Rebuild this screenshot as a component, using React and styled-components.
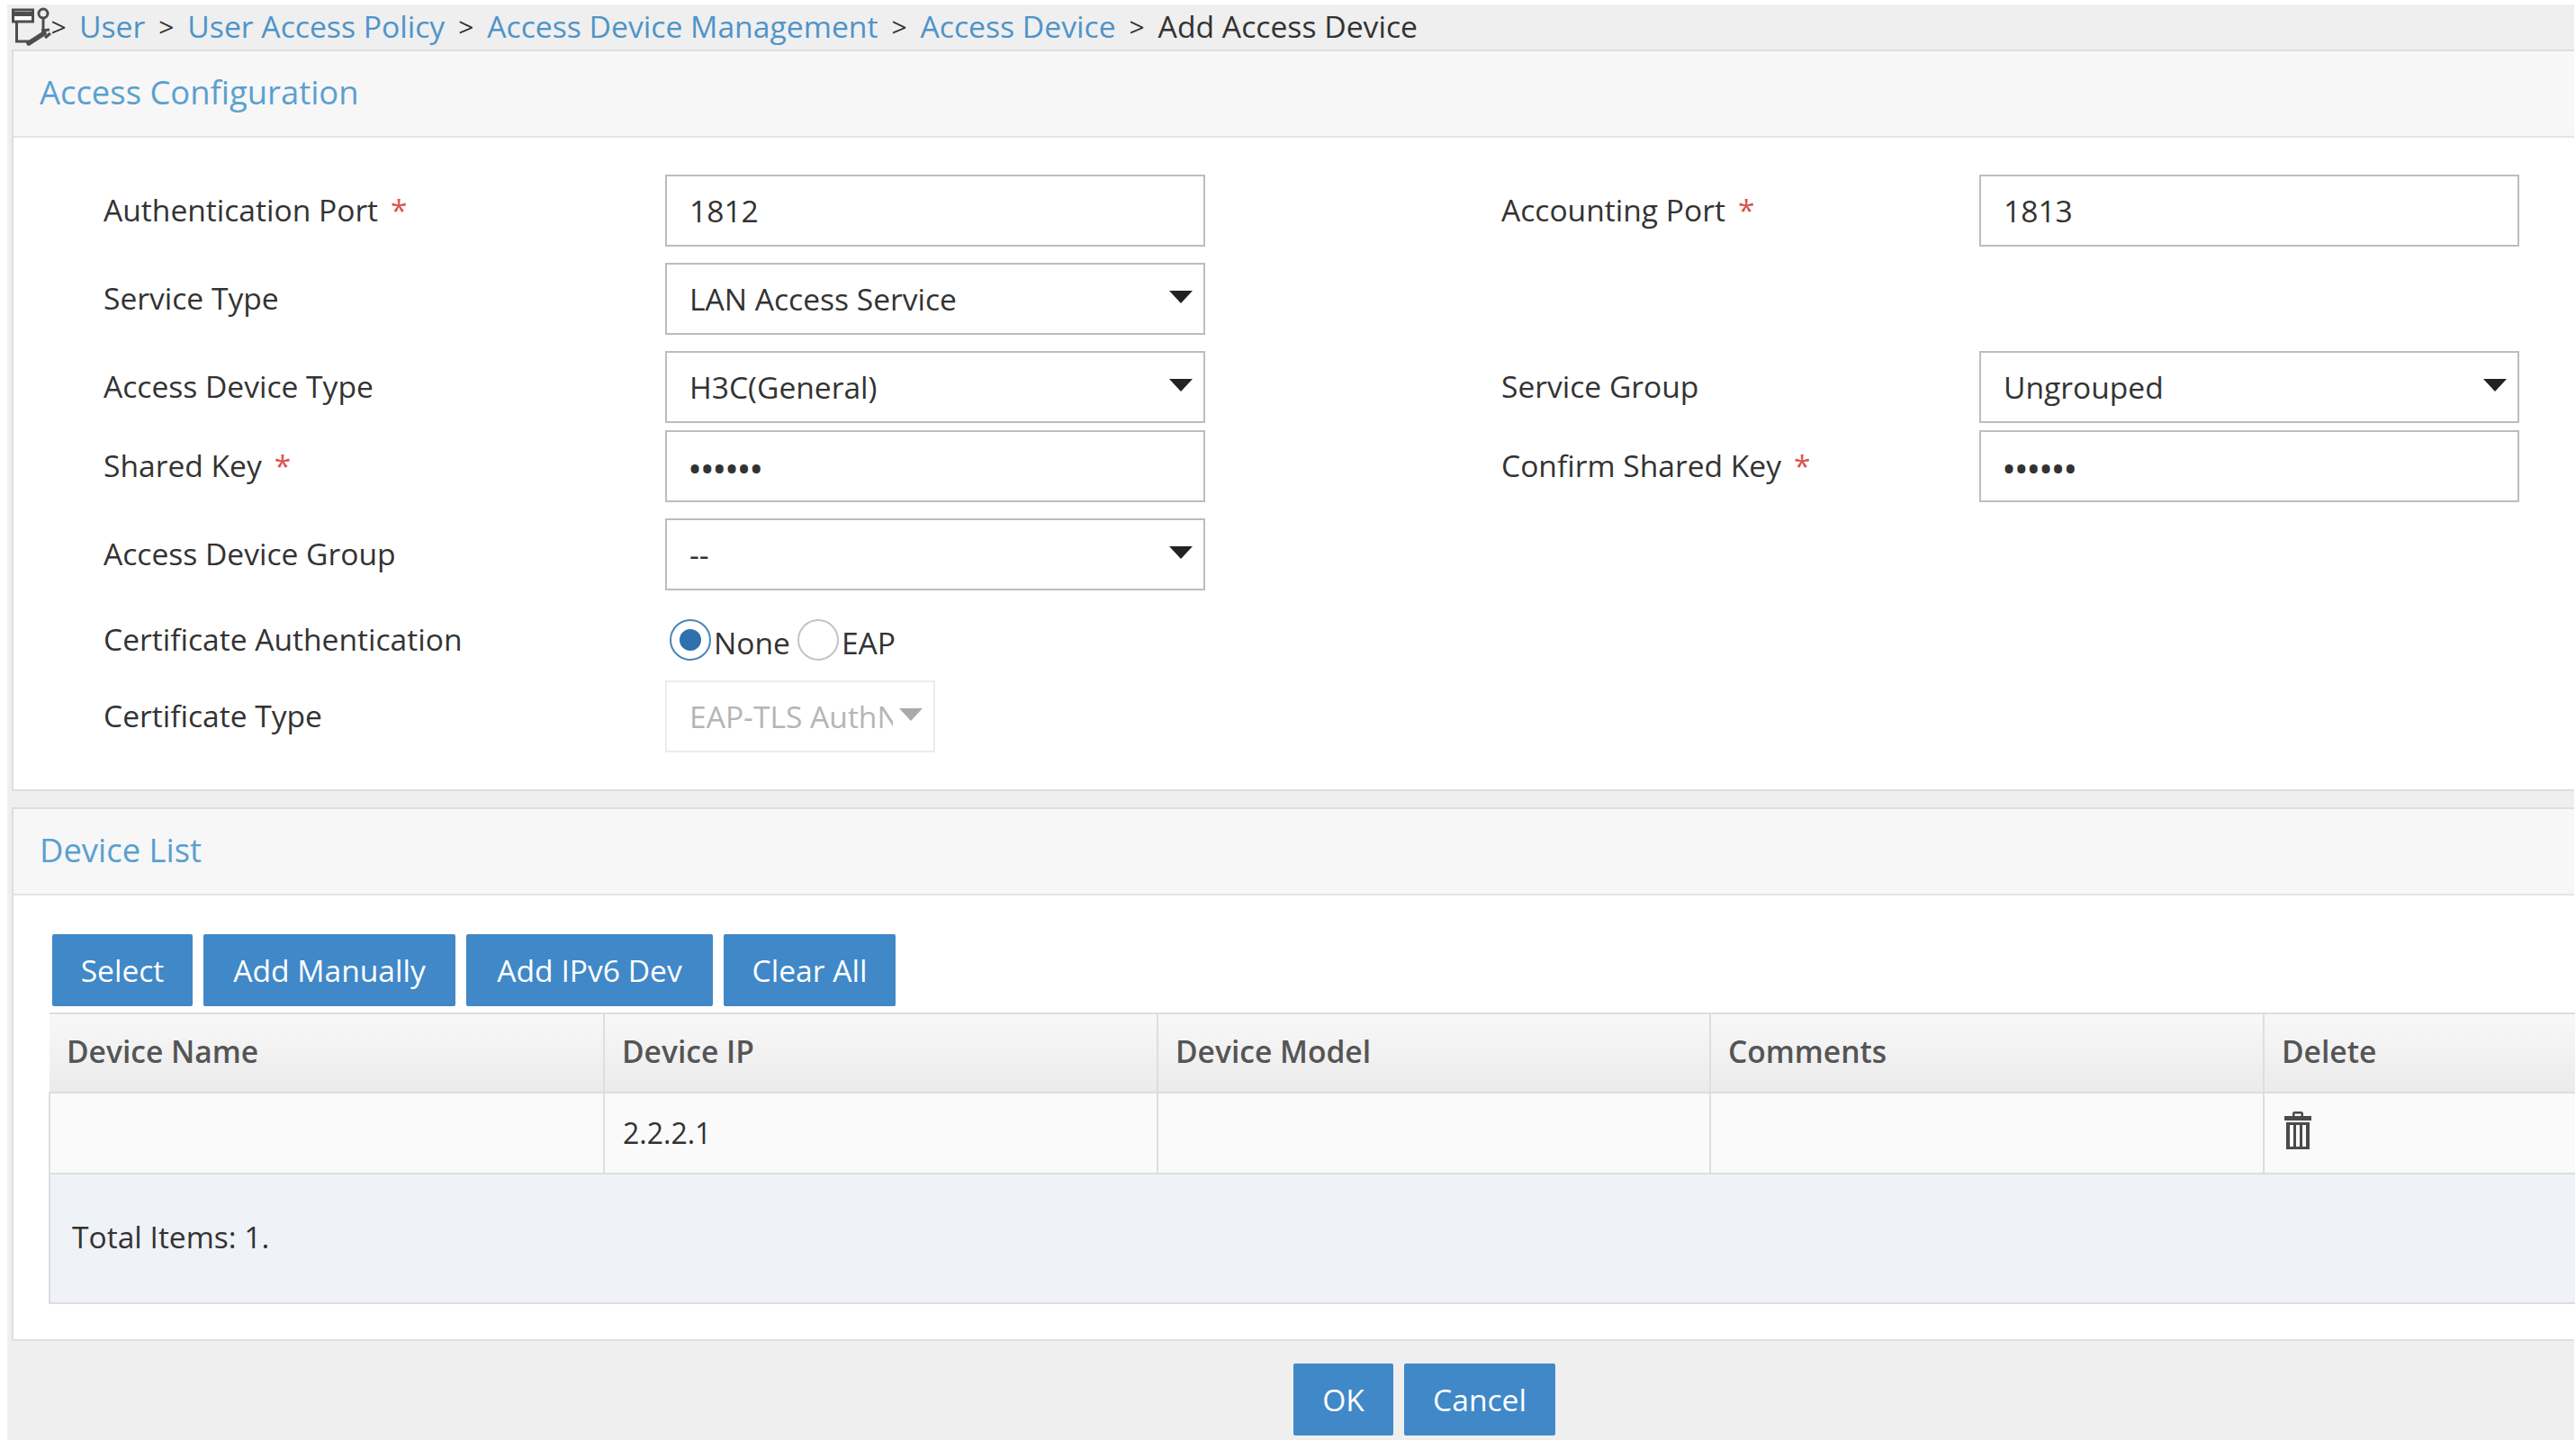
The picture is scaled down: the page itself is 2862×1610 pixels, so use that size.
import React from 'react';
import styled, { createGlobalStyle } from 'styled-components';

const colors = {
  link: '#4f94c9',
  title: '#5aa0d0',
  text: '#333333',
  border: '#bdbdbd',
  line: '#dedede',
  blue: '#4088c8',
  grey: '#efefef',
};

const GlobalStyle = createGlobalStyle`
  html, body {
    margin: 0;
    padding: 0;
    background: #ffffff;
    font-family: "Open Sans", "Noto Sans", sans-serif;
    color: ${colors.text};
  }
  * {
    box-sizing: border-box;
  }
`;

const Page = styled.div`
  width: 2862px;
  height: 1610px;
  padding: 5px 2px 10px 8px;
`;
const Frame = styled.div`
  height: 100%;
  background: ${colors.grey};
  display: flex;
  flex-direction: column;
`;
const Breadcrumb = styled.nav`
  height: 50px;
  flex: none;
  display: flex;
  align-items: center;
  padding: 0 0 2px 5px;
  font-size: 33.7px;
  color: ${colors.text};
`;
const CrumbIcon = styled.svg`
  width: 44px;
  height: 44px;
  flex: none;
`;
const Sep = styled.span`
  width: 47px;
  text-align: center;
  font-size: 30px;
  flex: none;
`;
const FirstSep = styled(Sep)`
  width: 20px;
  margin-left: -2px;
  margin-right: 13px;
`;
const Crumb = styled.a`
  color: ${colors.link};
  text-decoration: none;
`;
const Panel = styled.section`
  flex: none;
  margin-left: 5px;
  background: #ffffff;
  border: 2px solid ${colors.line};
  border-right: none;
`;
const PanelHead = styled.h2`
  margin: 0;
  height: 96px;
  display: flex;
  align-items: center;
  padding: 0 0 5px 29px;
  background: #f7f7f7;
  border-bottom: 2px solid #e4e4e4;
  font-size: 36.4px;
  font-weight: 400;
  color: ${colors.title};
`;
const FormBody = styled.div`
  padding: 41px 0 41px 100px;
`;
const Row = styled.div`
  display: grid;
  grid-template-columns: 624px 600px 329px 531px 600px;
  align-items: center;
  margin-top: ${(p) => p.$gap || 0}px;
`;
const Label = styled.label`
  font-size: 33.6px;
  line-height: 40px;
  white-space: nowrap;
  padding-bottom: 3px;
`;
const Star = styled.span`
  color: #d9534f;
  margin-left: 14px;
`;
const Field = styled.div`
  position: relative;
  height: 80px;
  border: 2px solid ${(p) => (p.$disabled ? '#ececec' : colors.border)};
  display: flex;
  align-items: center;
  padding: 0 0 1px 25px;
  font-size: 33.6px;
  color: ${(p) => (p.$disabled ? '#b5b5b5' : colors.text)};
  background: #ffffff;
  width: ${(p) => (p.$narrow ? '300px' : '100%')};
  overflow: hidden;
  white-space: nowrap;
`;
const Dots = styled.span`
  font-size: 32px;
  font-weight: 700;
  letter-spacing: 1.6px;
  line-height: 1;
  margin-top: 6px;
`;
const Arrow = styled.span`
  position: absolute;
  right: 12px;
  top: 29px;
  width: 0;
  height: 0;
  border-left: 13px solid transparent;
  border-right: 13px solid transparent;
  border-top: 14px solid ${(p) => (p.$disabled ? '#aaaaaa' : '#222222')};
`;
const DisabledText = styled.span`
  display: block;
  width: 226px;
  overflow: hidden;
`;
const RadioRow = styled.div`
  display: flex;
  align-items: center;
  height: 46px;
  padding-left: 5px;
  font-size: 33.6px;
  line-height: 40px;
`;
const Radio = styled.span`
  width: 46px;
  height: 46px;
  flex: none;
  border-radius: 50%;
  border: 2px solid ${(p) => (p.$on ? '#4a86b8' : '#c4c4c4')};
  display: flex;
  align-items: center;
  justify-content: center;
  &::after {
    content: '';
    display: ${(p) => (p.$on ? 'block' : 'none')};
    width: 24px;
    height: 24px;
    border-radius: 50%;
    background: #2f70ae;
  }
`;
const RadioText = styled.span`
  margin: 6px 8px 0 3px;
`;
const ListBody = styled.div`
  padding: 43px 0 39px 39px;
`;
const ButtonRow = styled.div`
  display: flex;
  gap: 12px;
  padding-left: 4px;
`;
const Button = styled.button`
  height: 80px;
  padding: 0;
  width: ${(p) => p.$w}px;
  border: none;
  border-radius: 2px;
  background: ${colors.blue};
  color: #ffffff;
  font-family: inherit;
  font-size: 33.6px;
`;
const Table = styled.table`
  margin-top: 7px;
  width: 2806px;
  border-collapse: collapse;
  table-layout: fixed;
`;
const Th = styled.th`
  height: 88px;
  padding: 0 0 5px 19px;
  text-align: left;
  font-size: 33.6px;
  font-weight: 600;
  color: #555555;
  background: linear-gradient(#f8f8f8, #ebebeb);
  border: 2px solid ${colors.line};
  border-left: ${(p) => (p.$first ? 'none' : `2px solid ${colors.line}`)};
  border-right: none;
`;
const Td = styled.td`
  height: 90px;
  padding: 0 0 2px 20px;
  font-size: 32px;
  background: #fafafa;
  border: 2px solid ${colors.line};
  border-right: none;
`;
const TotalCell = styled.td`
  height: 144px;
  padding: 0 0 4px 24px;
  font-size: 33.6px;
  background: #eff2f7;
  border: 2px solid ${colors.line};
  border-right: none;
`;
const TrashIcon = styled.svg`
  display: block;
  width: 32px;
  height: 42px;
  margin: -4px 0 0 1px;
`;
const Gap = styled.div`
  height: 18px;
  flex: none;
`;
const Footer = styled.footer`
  display: flex;
  gap: 12px;
  padding: 25px 0 0 1429px;
`;

const crumbs = ['User', 'User Access Policy', 'Access Device Management', 'Access Device'];
const columns = ['Device Name', 'Device IP', 'Device Model', 'Comments', 'Delete'];
const widths = [616, 615, 614, 615, 346];

const Select = ({ children }) => (
  <Field>
    {children}
    <Arrow />
  </Field>
);

const App = () => (
  <Page>
    <GlobalStyle />
    <Frame>
      <Breadcrumb>
        <CrumbIcon viewBox="0 0 44 44" fill="none" stroke="#4d4d4d" strokeWidth="3">
          <rect x="1.5" y="4" width="22" height="13" fill="#fff" />
          <path d="M1.5 8.5h22" strokeWidth="5" />
          <path d="M5.5 17v22h14" />
          <circle cx="35" cy="8" r="5" />
          <path d="M35 13v14" />
          <path d="M19 41l17-11" strokeWidth="5.5" strokeLinecap="round" />
          <path d="M33 27l9-1M37 35l6-5" strokeWidth="3.2" />
        </CrumbIcon>
        <FirstSep>&gt;</FirstSep>
        {crumbs.map((c) => (
          <React.Fragment key={c}>
            <Crumb href="#">{c}</Crumb>
            <Sep>&gt;</Sep>
          </React.Fragment>
        ))}
        <span>Add Access Device</span>
      </Breadcrumb>

      <Panel>
        <PanelHead>Access Configuration</PanelHead>
        <FormBody>
          <Row>
            <Label>Authentication Port<Star>*</Star></Label>
            <Field>1812</Field>
            <span />
            <Label>Accounting Port<Star>*</Star></Label>
            <Field>1813</Field>
          </Row>
          <Row $gap={18}>
            <Label>Service Type</Label>
            <Select>LAN Access Service</Select>
          </Row>
          <Row $gap={18}>
            <Label>Access Device Type</Label>
            <Select>H3C(General)</Select>
            <span />
            <Label>Service Group</Label>
            <Select>Ungrouped</Select>
          </Row>
          <Row $gap={8}>
            <Label>Shared Key<Star>*</Star></Label>
            <Field><Dots>••••••</Dots></Field>
            <span />
            <Label>Confirm Shared Key<Star>*</Star></Label>
            <Field><Dots>••••••</Dots></Field>
          </Row>
          <Row $gap={18}>
            <Label>Access Device Group</Label>
            <Select>--</Select>
          </Row>
          <Row $gap={32}>
            <Label>Certificate Authentication</Label>
            <RadioRow>
              <Radio $on />
              <RadioText>None</RadioText>
              <Radio />
              <RadioText>EAP</RadioText>
            </RadioRow>
          </Row>
          <Row $gap={22}>
            <Label>Certificate Type</Label>
            <Field $disabled $narrow>
              <DisabledText>EAP-TLS AuthN</DisabledText>
              <Arrow $disabled />
            </Field>
          </Row>
        </FormBody>
      </Panel>

      <Gap />

      <Panel>
        <PanelHead>Device List</PanelHead>
        <ListBody>
          <ButtonRow>
            <Button $w={156}>Select</Button>
            <Button $w={280}>Add Manually</Button>
            <Button $w={274}>Add IPv6 Dev</Button>
            <Button $w={191}>Clear All</Button>
          </ButtonRow>
          <Table>
            <colgroup>
              {widths.map((w, i) => <col key={i} width={w} />)}
            </colgroup>
            <thead>
              <tr>
                {columns.map((c, i) => <Th key={c} $first={i === 0}>{c}</Th>)}
              </tr>
            </thead>
            <tbody>
              <tr>
                <Td />
                <Td>2.2.2.1</Td>
                <Td />
                <Td />
                <Td>
                  <TrashIcon viewBox="0 0 32 42" fill="#4a4a4a">
                    <path d="M10 5V2.5C10 1 11 0 12.5 0h7C21 0 22 1 22 2.5V5h9v5H1V5h9zm2.5 0h7V2.5h-7V5z" />
                    <path d="M3 12h26v30H3V12zm4 3v24h4V15H7zm7 0v24h4V15h-4zm7 0v24h4V15h-4z" fillRule="evenodd" />
                  </TrashIcon>
                </Td>
              </tr>
              <tr>
                <TotalCell colSpan={5}>Total Items: 1.</TotalCell>
              </tr>
            </tbody>
          </Table>
        </ListBody>
      </Panel>

      <Footer>
        <Button $w={111}>OK</Button>
        <Button $w={168}>Cancel</Button>
      </Footer>
    </Frame>
  </Page>
);

export default App;
